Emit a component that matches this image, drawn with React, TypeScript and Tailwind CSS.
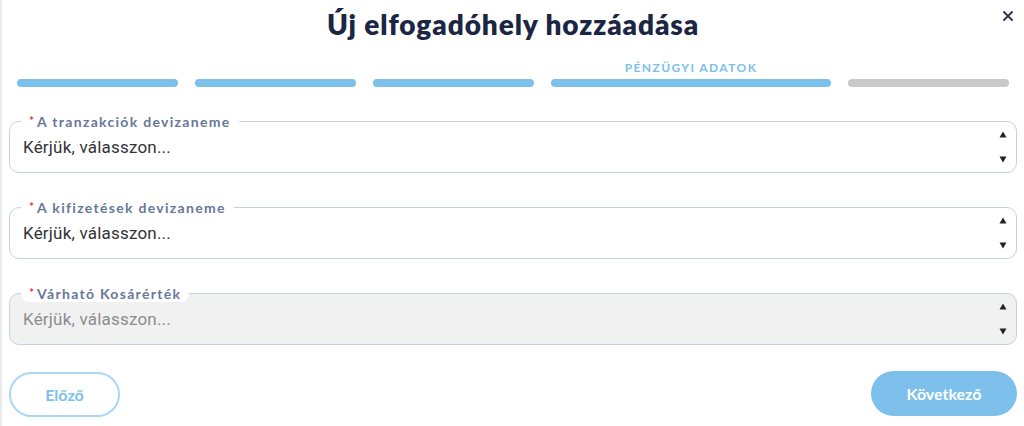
import React from "react";

const Arrows = () => (
  <div className="absolute right-[9px] top-0 bottom-0 flex flex-col justify-between py-[9px]">
    <svg width="8" height="7" viewBox="0 0 8 7"><path d="M4 0.5 L7.5 6.5 L0.5 6.5 Z" fill="#222" /></svg>
    <svg width="8" height="7" viewBox="0 0 8 7"><path d="M0.5 0.5 L7.5 0.5 L4 6.5 Z" fill="#222" /></svg>
  </div>
);

const Field = ({ label, disabled }: { label: string; disabled?: boolean }) => (
  <div
    className={
      "relative h-[52px] rounded-[10px] border border-[#c9d0e1] flex items-center pl-[13px] " +
      (disabled ? "bg-[#f1f1f2]" : "bg-white")
    }
  >
    <div
      className="absolute left-[11px] top-[-10px] h-[18px] px-[8px] bg-white rounded-[8px] flex items-center text-[14px] font-bold tracking-[1.3px] text-[#67779a]"
      style={{ fontFamily: "Lato, sans-serif" }}
    >
      <span className="text-[#e2343f] mr-[3px] text-[12px] tracking-normal">*</span>
      {label}
    </div>
    <span
      className={"text-[17px] tracking-[0.2px] mt-[2px] " + (disabled ? "text-[#8c8c8c]" : "text-[#333333]")}
      style={{ fontFamily: "Roboto, sans-serif" }}
    >
      Kérjük, válasszon...
    </span>
    <Arrows />
  </div>
);

export default function App() {
  return (
    <div
      className="relative w-[1024px] h-[426px] bg-white border-l-2 border-[#ebebeb] px-[7px] overflow-hidden"
      style={{ fontFamily: "Lato, sans-serif" }}
    >
      <div className="h-[60px] flex justify-center pt-[8px]">
        <h1 className="text-[28px] leading-[32px] font-extrabold tracking-[0.9px] text-[#1b2643]">
          Új elfogadóhely hozzáadása
        </h1>
      </div>
      <button className="absolute right-[10px] top-[10px] w-[12px] h-[12px]">
        <svg width="12" height="12" viewBox="0 0 12 12">
          <path d="M2 2 L10 10 M10 2 L2 10" stroke="#2f3750" strokeWidth="2" strokeLinecap="round" />
        </svg>
      </button>

      <div className="flex gap-[17px] px-[8px]">
        {[0, 1, 2].map((i) => (
          <div key={i} className="w-[161px] flex flex-col">
            <div className="h-[16px]" />
            <div className="mt-[3px] h-[8px] rounded-full bg-[#7cc0eb]" />
          </div>
        ))}
        <div className="flex-1 flex flex-col">
          <div className="h-[16px] text-center text-[12px] leading-[16px] font-bold tracking-[1.4px] text-[#7cc0eb]">
            PÉNZÜGYI ADATOK
          </div>
          <div className="mt-[3px] h-[8px] rounded-full bg-[#7cc0eb]" />
        </div>
        <div className="w-[161px] flex flex-col">
          <div className="h-[16px]" />
          <div className="mt-[3px] h-[8px] rounded-full bg-[#c9c9c9]" />
        </div>
      </div>

      <div className="mt-[34px] flex flex-col gap-[34px]">
        <Field label="A tranzakciók devizaneme" />
        <Field label="A kifizetések devizaneme" />
        <Field label="Várható Kosárérték" disabled />
      </div>

      <div className="mt-[26px] flex justify-between items-start">
        <button className="mt-[1px] w-[111px] h-[45px] rounded-full border-2 border-[#a9d7f5] text-[#7cc0eb] text-[16px] font-bold">
          Előző
        </button>
        <button className="w-[146px] h-[45px] rounded-full bg-[#7cc0eb] text-white text-[16px] font-bold">
          Következő
        </button>
      </div>
    </div>
  );
}
